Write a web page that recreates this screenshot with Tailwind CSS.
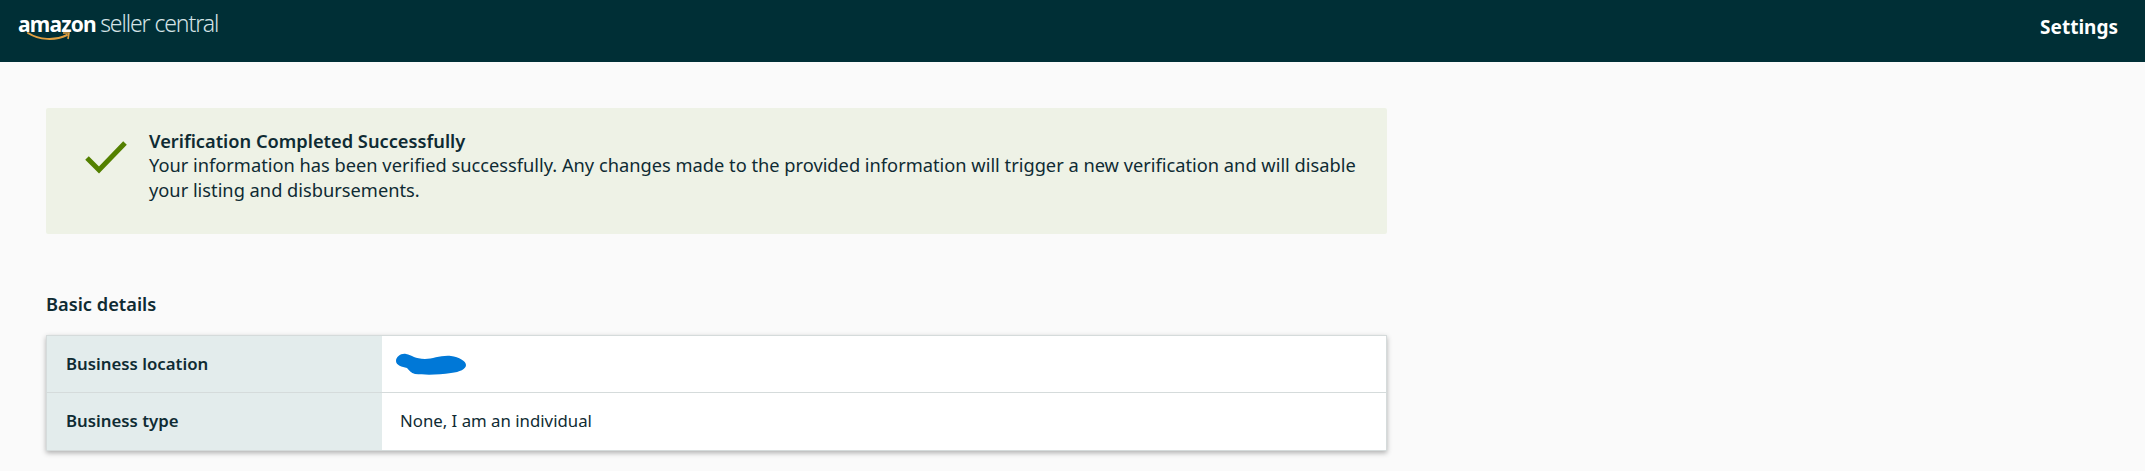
<!DOCTYPE html>
<html lang="en">
<head>
  <meta charset="UTF-8">
  <title>Seller Central</title>
  <script src="https://cdn.jsdelivr.net/npm/@tailwindcss/browser@4"></script>
</head>
<body class="bg-[#fafafa] min-h-screen font-['Noto_Sans',sans-serif] text-[#0f2b33] overflow-hidden">

  <!-- Top nav -->
  <div class="bg-[#002f36] h-[62px] flex justify-between pl-[18px] pr-[27px]">
    <div class="relative w-[220px] h-[46px] leading-[46px] whitespace-nowrap">
      <span class="font-bold text-white text-[21px] tracking-[-0.8px]">amazon</span> <span class="text-[#d5e3e6] font-light text-[23px] tracking-[-1.1px]">seller central</span>
      <svg class="absolute left-[9px] top-[31px]" width="46" height="12" viewBox="0 0 46 12" fill="none">
        <path d="M1 2C12 9 28 10 40 4" stroke="#e2a042" stroke-width="2" stroke-linecap="round"/>
        <path d="M36 2L42 2L41 8" stroke="#e2a042" stroke-width="1.6"/>
      </svg>
    </div>
    <div class="text-white font-bold text-[19px] leading-[55px]">Settings</div>
  </div>

  <div class="pl-[46px] w-[1387px]">
    <!-- Alert -->
    <div class="mt-[46px] h-[126px] bg-[#eef2e6] flex pl-[39px] pr-[20px] pt-[21px] rounded-[2px]">
      <svg class="mt-[11px] shrink-0" width="42" height="34" viewBox="0 0 42 34" fill="none">
        <path d="M2 18L14 30L40 3" stroke="#538000" stroke-width="5"/>
      </svg>
      <div class="ml-[22px] text-[18.25px]">
        <div class="font-semibold leading-[24px]">Verification Completed Successfully</div>
        <div class="leading-[25px] -mt-[1px]">Your information has been verified successfully. Any changes made to the provided information will trigger a new verification and will disable your listing and disbursements.</div>
      </div>
    </div>

    <h2 class="mt-[58px] font-semibold text-[18.25px] leading-[24px]">Basic details</h2>

    <!-- Details table -->
    <div class="mt-[19px] bg-white border border-[#d5dbdb] shadow-[0_2px_5px_rgba(0,0,0,0.3)] text-[16.8px]">
      <div class="flex h-[57px] border-b border-[#d5dbdb]">
        <div class="w-[335px] bg-[#e3ecec] pl-[19px] flex items-center font-semibold">Business location</div>
        <div class="flex-1 pl-[18px] flex items-center">
          <svg width="72" height="24" viewBox="0 0 72 24" fill="#0078d7" class="-ml-[5px]">
            <path d="M1 9C1 5 6 1 11 2C17 3 20 7 30 7C38 7 46 3 56 4C64 5 71 9 71 13C71 17 65 20 56 21C44 23 30 23 20 22C16 21 14 18 12 16C7 15 1 13 1 9Z"/>
          </svg>
        </div>
      </div>
      <div class="flex h-[57px]">
        <div class="w-[335px] bg-[#e3ecec] pl-[19px] pb-[2px] flex items-center font-semibold">Business type</div>
        <div class="flex-1 pl-[18px] pb-[2px] flex items-center">None, I am an individual</div>
      </div>
    </div>
  </div>

</body>
</html>
